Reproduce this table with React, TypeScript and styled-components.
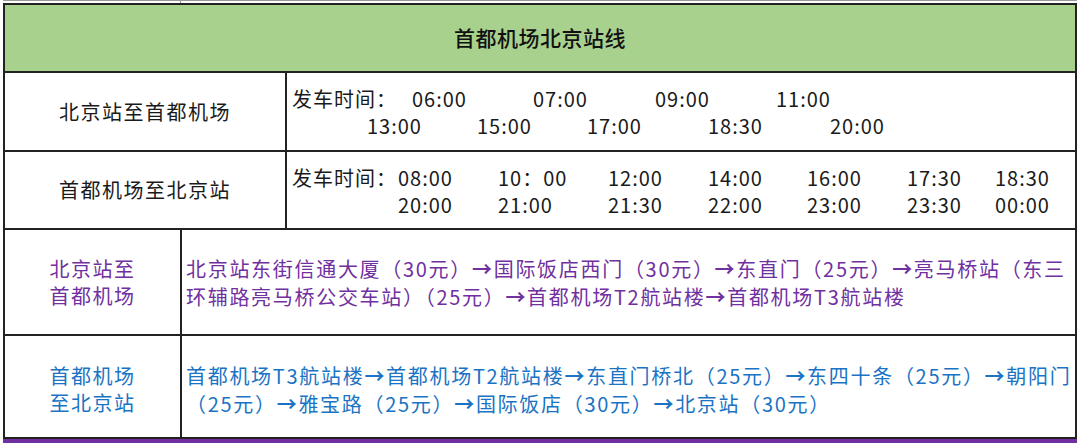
import styled, { createGlobalStyle } from 'styled-components';

const GlobalStyle = createGlobalStyle`
  html, body {
    margin: 0;
    padding: 0;
    background: #ffffff;
  }

  body {
    width: 1080px;
    height: 443px;
    overflow: hidden;
    font-family: "Noto Sans CJK SC", "Noto Sans", sans-serif;
    color: #1a1a1a;
  }
`;

const Page = styled.div`
  width: 1080px;
  height: 443px;
  display: flex;
  flex-direction: column;
`;

const TopStrip = styled.div`
  height: 3px;
  margin-left: 3px;
  width: 1074px;
  box-sizing: border-box;
  border-top: 1px solid #9a9a9a;
  display: flex;
`;

const StripCell = styled.div<{ $width: number }>`
  width: ${({ $width }) => $width}px;
  border-right: 1px solid #9a9a9a;
`;

const Table = styled.div`
  margin-left: 3px;
  width: 1074px;
  box-sizing: border-box;
  border: 2px solid #222;
  border-bottom: none;
  display: flex;
  flex-direction: column;
`;

const Header = styled.div`
  height: 68px;
  box-sizing: border-box;
  background: #a9d18e;
  border-bottom: 2px solid #222;
  display: flex;
  align-items: center;
  justify-content: center;
  font-size: 21px;
  font-weight: 500;
  letter-spacing: 0.5px;
  color: #111;
  padding-bottom: 2px;
`;

const Row = styled.div<{ $height: number }>`
  height: ${({ $height }) => $height}px;
  box-sizing: border-box;
  border-bottom: 2px solid #222;
  display: flex;
`;

const LabelCell = styled.div<{ $width: number; $color?: string; $shift?: number }>`
  width: ${({ $width }) => $width}px;
  flex: none;
  box-sizing: border-box;
  border-right: 2px solid #222;
  display: flex;
  flex-direction: column;
  align-items: center;
  justify-content: center;
  padding-top: ${({ $shift }) => $shift ?? 0}px;
  font-size: 20px;
  letter-spacing: 1.5px;
  line-height: 27px;
  color: ${({ $color }) => $color ?? '#1a1a1a'};
`;

const ScheduleCell = styled.div`
  flex: 1;
  display: flex;
  flex-direction: column;
  padding: 12px 0 0 5px;
  font-size: 20px;
  line-height: 27px;
  letter-spacing: 1px;
`;

const TimeLine = styled.div<{ $indent?: number }>`
  display: flex;
  white-space: nowrap;
  padding-left: ${({ $indent }) => $indent ?? 0}px;
`;

const TimeSlot = styled.span<{ $width: number }>`
  width: ${({ $width }) => $width}px;
  flex: none;
`;

const RouteCell = styled.div<{ $color: string; $shift?: number }>`
  flex: 1;
  display: flex;
  flex-direction: column;
  justify-content: center;
  padding: ${({ $shift }) => $shift ?? 0}px 0 0 4px;
  font-size: 20px;
  line-height: 27.5px;
  letter-spacing: 1.7px;
  white-space: nowrap;
  color: ${({ $color }) => $color};
`;

const Arrow = styled.span`
  font-weight: 700;
`;

const BottomBand = styled.div`
  margin-left: 3px;
  width: 1074px;
  height: 5px;
  background: #7030a0;
`;

const PURPLE = '#7030a0';
const BLUE = '#1a73c4';

const a = <Arrow>→</Arrow>;

export default function App() {
  return (
    <>
      <GlobalStyle />
      <Page>
        <TopStrip>
          <StripCell $width={177} />
        </TopStrip>
        <Table>
          <Header>首都机场北京站线</Header>

          <Row $height={79}>
            <LabelCell $width={282}>北京站至首都机场</LabelCell>
            <ScheduleCell>
              <TimeLine>
                <TimeSlot $width={120}>发车时间：</TimeSlot>
                <TimeSlot $width={121}>06:00</TimeSlot>
                <TimeSlot $width={122}>07:00</TimeSlot>
                <TimeSlot $width={121}>09:00</TimeSlot>
                <TimeSlot $width={100}>11:00</TimeSlot>
              </TimeLine>
              <TimeLine $indent={75}>
                <TimeSlot $width={110}>13:00</TimeSlot>
                <TimeSlot $width={110}>15:00</TimeSlot>
                <TimeSlot $width={121}>17:00</TimeSlot>
                <TimeSlot $width={122}>18:30</TimeSlot>
                <TimeSlot $width={100}>20:00</TimeSlot>
              </TimeLine>
            </ScheduleCell>
          </Row>

          <Row $height={78}>
            <LabelCell $width={282}>首都机场至北京站</LabelCell>
            <ScheduleCell>
              <TimeLine>
                <TimeSlot $width={106}>发车时间：</TimeSlot>
                <TimeSlot $width={100}>08:00</TimeSlot>
                <TimeSlot $width={110}>10：00</TimeSlot>
                <TimeSlot $width={100}>12:00</TimeSlot>
                <TimeSlot $width={99}>14:00</TimeSlot>
                <TimeSlot $width={100}>16:00</TimeSlot>
                <TimeSlot $width={88}>17:30</TimeSlot>
                <TimeSlot $width={60}>18:30</TimeSlot>
              </TimeLine>
              <TimeLine $indent={106}>
                <TimeSlot $width={100}>20:00</TimeSlot>
                <TimeSlot $width={110}>21:00</TimeSlot>
                <TimeSlot $width={100}>21:30</TimeSlot>
                <TimeSlot $width={99}>22:00</TimeSlot>
                <TimeSlot $width={100}>23:00</TimeSlot>
                <TimeSlot $width={88}>23:30</TimeSlot>
                <TimeSlot $width={60}>00:00</TimeSlot>
              </TimeLine>
            </ScheduleCell>
          </Row>

          <Row $height={106}>
            <LabelCell $width={177} $color={PURPLE}>
              <span>北京站至</span>
              <span>首都机场</span>
            </LabelCell>
            <RouteCell $color={PURPLE} $shift={2}>
              <span>
                北京站东街信通大厦（30元）{a}国际饭店西门（30元）{a}东直门（25元）{a}亮马桥站（东三
              </span>
              <span>
                环辅路亮马桥公交车站）（25元）{a}首都机场T2航站楼{a}首都机场T3航站楼
              </span>
            </RouteCell>
          </Row>

          <Row $height={103}>
            <LabelCell $width={177} $color={BLUE} $shift={5}>
              <span>首都机场</span>
              <span>至北京站</span>
            </LabelCell>
            <RouteCell $color={BLUE} $shift={7}>
              <span>
                首都机场T3航站楼{a}首都机场T2航站楼{a}东直门桥北（25元）{a}东四十条（25元）{a}朝阳门
              </span>
              <span>
                （25元）{a}雅宝路（25元）{a}国际饭店（30元）{a}北京站（30元）
              </span>
            </RouteCell>
          </Row>
        </Table>
        <BottomBand />
      </Page>
    </>
  );
}
